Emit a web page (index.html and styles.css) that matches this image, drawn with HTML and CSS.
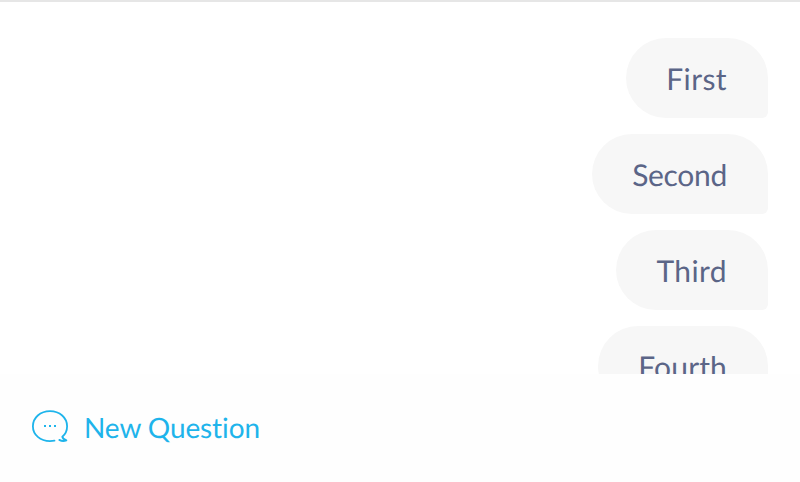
FILE: index.html
```html
<!DOCTYPE html>
<html lang="en">
<head>
<meta charset="utf-8">
<title>Chat</title>
<link rel="stylesheet" href="styles.css">
</head>
<body>
<main class="messages">
<div class="bubble bubble-loose">First</div>
<div class="bubble bubble-tight">Second</div>
<div class="bubble bubble-loose">Third</div>
<div class="bubble bubble-medium">Fourth</div>
</main>
<footer class="footer">
<button class="new-question" type="button">
<svg class="icon" viewBox="0 -1 40 36" fill="none" stroke="currentColor" stroke-width="1.8" stroke-linecap="round" stroke-linejoin="round"><path d="M24.5 30.7C23 31 21.5 31.1 20 31.1C10.3 31.1 2.9 24.8 2.9 16.2C2.9 7.7 10.3 1.1 20 1.1S37.1 7.7 37.1 16.2C37.1 20.5 35 24.5 32.3 26.7C32.6 28.2 34.3 29.5 36.4 30.4C34 31.3 31.2 31 29.3 29.9"/><g fill="currentColor" stroke="none"><rect x="14" y="15" width="2" height="2"/><rect x="19" y="15" width="2" height="2"/><rect x="24" y="15" width="2" height="2"/></g></svg>
<span>New Question</span>
</button>
</footer>
</body>
</html>
```

FILE: styles.css
```css
* { box-sizing: border-box; }
body {
  margin: 0;
  height: 482px;
  display: flex;
  flex-direction: column;
  overflow: hidden;
  background: #fff;
  font-family: Lato, sans-serif;
  font-variant-ligatures: none;
  text-rendering: geometricPrecision;
}
.messages {
  height: 374px;
  flex: none;
  border-top: 2px solid #e6e6e6;
  padding: 36px 32px 0;
  display: flex;
  flex-direction: column;
  align-items: flex-end;
  gap: 16px;
  overflow: hidden;
}
.bubble {
  flex: none;
  height: 80px;
  padding: 0 41px 0 40px;
  border-radius: 40px 40px 6px 40px;
  background: #f7f7f7;
  color: #5b6587;
  font-size: 30px;
  line-height: 82px;
}
.bubble-loose { letter-spacing: 0.4px; }
.bubble-medium { letter-spacing: 0.15px; }
.bubble-tight { letter-spacing: -0.3px; }
.footer {
  flex: 1;
  padding: 32px 30px;
  background: #fefefe;
}
.new-question {
  display: flex;
  align-items: center;
  gap: 14px;
  height: 42px;
  padding: 0;
  border: 0;
  background: none;
  color: #1eb4eb;
  font: 28px/42px Lato, sans-serif;
  font-variant-ligatures: none;
  letter-spacing: -0.1px;
  text-rendering: geometricPrecision;
}
.icon { width: 40px; height: 36px; }
```
